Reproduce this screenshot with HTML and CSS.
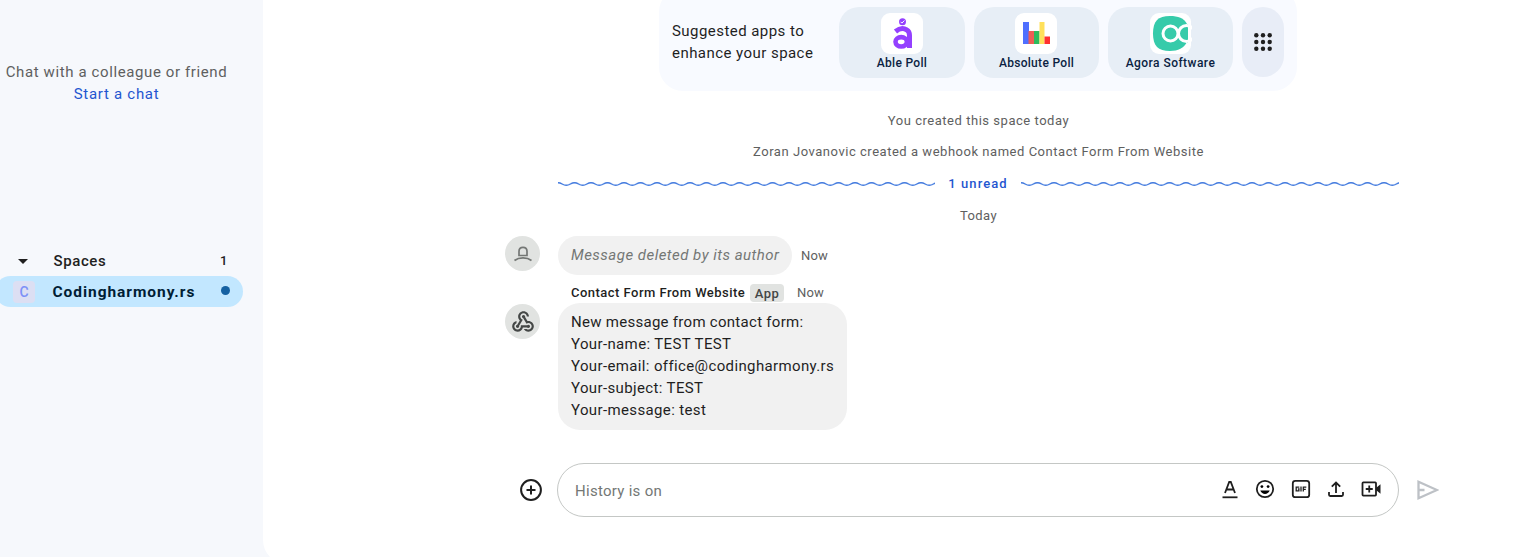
FILE: index.html
```html
<!DOCTYPE html>
<html lang="en">
<head>
<meta charset="utf-8">
<title>Codingharmony.rs - Chat</title>
<link rel="stylesheet" href="styles.css">
</head>
<body>
<div class="app">
  <aside class="sidebar">
    <div class="empty-chat">
      <p class="empty-text"><span>Chat with a colleague or friend</span></p>
      <a class="start-link">Start a chat</a>
    </div>
    <div class="section-head">
      <svg class="caret" viewBox="0 0 10 5"><path d="M0 0h10L5 5z"/></svg>
      <span class="section-title">Spaces</span>
      <span class="section-count">1</span>
    </div>
    <div class="space-row">
      <span class="space-avatar">C</span>
      <span class="space-name">Codingharmony.rs</span>
      <span class="unread-dot"></span>
    </div>
  </aside>
  <main class="main">
    <section class="suggest">
      <p class="suggest-text">Suggested apps to<br>enhance your space</p>
      <div class="app-card first">
        <span class="app-icon"><svg viewBox="0 0 42 41"><path d="M14.500 18.500q6-5 11.200-1.600 2.800 1.600 2.800 5.500V35" fill="none" stroke="#9440ff" stroke-width="5"/><ellipse cx="20.2" cy="28.800" rx="5.700" ry="4.700" fill="none" stroke="#9440ff" stroke-width="4.600"/><circle cx="21.500" cy="8.800" r="3.500" fill="#9440ff"/><path d="M19.600 8.800l1.300 1.300 2.500-2.600" fill="none" stroke="#fff" stroke-width="1"/></svg></span>
        <span class="app-name">Able Poll</span>
      </div>
      <div class="app-card">
        <span class="app-icon shifted"><svg viewBox="0 0 42 41"><path fill="#4f6fff" d="M8 9h6v22H8z"/><path fill="#ee5d55" d="M13.500 18H19v13h-5.500z"/><path fill="#2dbb5d" d="M19 18h5.500v13H19z"/><path fill="#ffe05a" d="M24.500 9h5v22h-5z"/><path fill="#ff3030" d="M29.500 23.500H35V31h-5.500z"/></svg></span>
        <span class="app-name">Absolute Poll</span>
      </div>
      <div class="app-card">
        <span class="app-icon wide"><svg viewBox="0 0 42 41"><path fill="#36cbaa" d="M20 3c8 0 14 2 17 8v18c-3 6-9 9-17 9C8 38 3 33 3 20.500S8 3 20 3z"/><path fill="#36cbaa" d="M30 11h8v19h-8z"/><g fill="none" stroke="#fff" stroke-width="3"><circle cx="20.500" cy="20.500" r="7.500"/><circle cx="36.500" cy="20.500" r="8"/></g><path fill="#fff" d="M38 8h3v25h-3z"/></svg></span>
        <span class="app-name agora">Agora Software</span>
      </div>
      <div class="more-apps"><svg viewBox="0 0 18 18"><g fill="#1f1f1f"><circle cx="2.300" cy="2.300" r="2.200"/><circle cx="9" cy="2.300" r="2.200"/><circle cx="15.700" cy="2.300" r="2.200"/><circle cx="2.300" cy="9" r="2.200"/><circle cx="9" cy="9" r="2.200"/><circle cx="15.700" cy="9" r="2.200"/><circle cx="2.300" cy="15.700" r="2.200"/><circle cx="9" cy="15.700" r="2.200"/><circle cx="15.700" cy="15.700" r="2.200"/></g></svg></div>
    </section>
    <p class="event">You created this space today</p>
    <p class="event">Zoran Jovanovic created a webhook named Contact Form From Website</p>
    <div class="unread">
      <svg class="wave"><defs><pattern id="w" width="16.500" height="6" patternUnits="userSpaceOnUse"><path d="M-4.125 3Q0 .4 4.125 3T12.375 3T20.625 3" fill="none" stroke="#3f78de" stroke-width="1.400"/></pattern></defs><rect width="100%" height="6" fill="url(#w)"/></svg>
      <span class="unread-label">1 unread</span>
      <svg class="wave"><rect width="100%" height="6" fill="url(#w)"/></svg>
    </div>
    <p class="event day">Today</p>

    <div class="message deleted">
      <span class="avatar"><svg viewBox="0 0 35 35" fill="none" stroke="#747775" stroke-width="1.700"><path d="M14 19.500v-4.300c0-5.200 8-5.200 8 0v4.300z"/><path d="M9.500 24.500c4.500-3.400 12.500-3.400 17 0"/></svg></span>
      <div class="bubble"><em>Message deleted by its author</em></div>
      <span class="time">Now</span>
    </div>
    <div class="message-head">
      <span class="sender">Contact Form From Website</span>
      <span class="badge">App</span>
      <span class="time">Now</span>
    </div>
    <div class="message form">
      <span class="avatar"><svg class="hook" viewBox="0 0 24 24"><path fill="#444746" d="M10 15h5.880c.27-.31.67-.5 1.120-.5.830 0 1.500.67 1.500 1.500s-.67 1.500-1.500 1.500c-.44 0-.84-.19-1.120-.5H11.900c-.46 2.280-2.480 4-4.900 4-2.760 0-5-2.240-5-5 0-2.420 1.720-4.440 4-4.900v2.070c-1.160.41-2 1.530-2 2.830 0 1.650 1.350 3 3 3s3-1.350 3-3v-1zm2.500-11c1.650 0 3 1.350 3 3h2c0-2.760-2.240-5-5-5s-5 2.240-5 5c0 1.430.6 2.710 1.550 3.620l-2.350 3.900c-.68.14-1.200.75-1.200 1.480 0 .83.67 1.500 1.500 1.500s1.500-.67 1.500-1.500c0-.16-.02-.31-.07-.45l3.380-5.630C10.490 9.610 9.500 8.420 9.500 7c0-1.650 1.350-3 3-3zm4.500 9c-.64 0-1.230.2-1.720.54l-3.050-5.070C11.530 8.350 11 7.740 11 7c0-.83.67-1.500 1.500-1.500S14 6.170 14 7c0 .15-.02.29-.06.43l2.190 3.650c.28-.05.57-.08.87-.08 2.760 0 5 2.240 5 5s-2.240 5-5 5c-1.850 0-3.470-1.010-4.330-2.500h2.670c.48.32 1.050.5 1.660.5 1.650 0 3-1.350 3-3s-1.350-3-3-3z"/></svg></span>
      <div class="bubble lines">
        <span>New message from contact form:</span>
        <span class="loose">Your-name: TEST TEST</span>
        <span class="loose">Your-email: office@codingharmony.rs</span>
        <span class="loose">Your-subject: TEST</span>
        <span class="loose">Your-message: test</span>
      </div>
    </div>

    <div class="composer">
      <svg class="add" viewBox="0 0 22 22" fill="none" stroke="#1f1f1f" stroke-width="2"><circle cx="11" cy="11" r="9.900"/><path d="M11 6.500v9M6.500 11h9"/></svg>
      <div class="input">
        <span class="placeholder">History is on</span>
        <div class="tools">
          <svg viewBox="0 0 20 20" fill="none" stroke="#1f1f1f" stroke-width="1.800"><path d="M5 14L9.200 3h1.600L15 14M6.500 10.500h7"/><path d="M2.500 18.300h15"/></svg>
          <svg viewBox="0 0 20 20"><circle cx="10" cy="10" r="8.200" fill="none" stroke="#1f1f1f" stroke-width="1.800"/><circle cx="6.900" cy="7.600" r="1.400"/><circle cx="13.100" cy="7.600" r="1.400"/><path d="M5.300 11.500h9.400c-1.700 4.500-7.700 4.500-9.400 0z"/></svg>
          <svg viewBox="0 0 20 20" fill="none" stroke="#1f1f1f"><rect x="1.800" y="1.800" width="16.400" height="16.400" rx="2.500" stroke-width="1.800"/><path stroke-width="1.300" d="M8.300 8.100H5.200v3.800h2.700v-2H6.800M10 7.500v5M12.300 12.500V8.100h3M12.300 10.300h2.500"/></svg>
          <svg viewBox="0 0 20 20" fill="none" stroke="#1f1f1f" stroke-width="1.800"><path d="M10 14V3.800M5.800 7.700L10 3.500l4.200 4.200M3 13v2.800c0 .8.400 1.200 1.200 1.200h11.600c.8 0 1.200-.4 1.200-1.200V13"/></svg>
          <svg viewBox="0 0 20 20" fill="none" stroke="#1f1f1f" stroke-width="1.800"><rect x="1.500" y="3.400" width="13.500" height="13.200" rx=".8"/><path d="M8.250 6.500v7M4.750 10h7"/><path fill="#1f1f1f" stroke="none" d="M15 9l4.500-3.800v9.600L15 11z"/></svg>
        </div>
      </div>
      <svg class="send" viewBox="0 0 22 20" fill="none" stroke="#bdc1c6" stroke-width="2.300"><path d="M1.500 1.800L20 10 1.500 18.200zM1.500 10h6"/></svg>
    </div>
  </main>
</div>
</body>
</html>
```
FILE: styles.css
```css
* { box-sizing: border-box; }
body { margin: 0; font: 15px/22px Roboto, "Liberation Sans", sans-serif; color: #1f1f1f; background: #f6f8fc; }
p { margin: 0; }
svg { display: block; flex: none; }
span { white-space: nowrap; }
.app { display: grid; grid-template-columns: 263px 1fr; height: 557px; overflow: hidden; }

.sidebar { padding-top: 61px; }
.empty-chat { width: 233px; text-align: center; letter-spacing: .61px; }
.empty-text { color: #5e6060; }
.start-link { color: #1f56d0; letter-spacing: .72px; }
.section-head { display: flex; align-items: center; height: 30px; margin-top: 141px; padding-left: 18px; }
.caret { width: 10px; height: 5px; margin-right: 25.500px; fill: #1f1f1f; }
.section-title { font-weight: 500; letter-spacing: .6px; flex: 1; }
.section-count { font-size: 13px; font-weight: 500; width: 43px; }
.space-row { display: flex; align-items: center; width: 248px; height: 31px; margin-left: -5px; background: #c2e7ff; border-radius: 16px; padding: 0 13px 0 18px; }
.space-avatar { width: 22px; height: 22px; border-radius: 4px; background: #dcdff3; color: #7c91f7; text-align: center; font-size: 14px; font-weight: 500; }
.space-name { flex: 1; margin-left: 17.500px; color: #001d35; font-size: 15.5px; font-weight: 700; letter-spacing: .95px; }
.unread-dot { width: 9px; height: 9px; border-radius: 50%; background: #1561a2; margin-top: -2px; }

/* The panel runs past the bottom of the window, so only part of its corner shows. */
.main { height: 564px; background: #fff; border-bottom-left-radius: 24px; padding-left: 242px; display: flex; flex-direction: column; }
.suggest { display: flex; margin: -12px 0 0 154px; width: 638px; height: 103px; padding: 19px 13px 13px; background: #f8faff; border-radius: 24px; }
.suggest-text { width: 167px; padding-top: 13px; letter-spacing: .45px; }
.app-card { display: flex; flex-direction: column; align-items: center; width: 125px; height: 71px; margin-right: 9px; padding-top: 6px; background: #e7eef6; border-radius: 20px; }
.app-card.first { width: 126px; }
.app-icon { width: 42px; height: 41px; border-radius: 9px; background: #fff; }
.app-icon svg { width: 42px; height: 41px; }
.app-icon.shifted { margin-right: 1px; }
.app-icon.wide { width: 41px; }
.app-name { margin-top: 1px; font-size: 12px; font-weight: 500; line-height: 16px; color: #0b1f42; letter-spacing: .3px; }
.agora { letter-spacing: .45px; }
.more-apps { display: grid; place-items: center; width: 42px; height: 70px; border-radius: 21px; background: #e8edf7; }
.more-apps svg { width: 18px; height: 18px; }

.event { margin-left: 53px; width: 841px; text-align: center; font-size: 13px; line-height: 20px; color: #5e6060; letter-spacing: .53px; margin-top: 20px; }
.event + .event { margin-top: 11px; }
.unread { display: flex; align-items: center; margin: 12px 0 0 53px; width: 841px; height: 20px; color: #1f56d0; }
.wave { width: 377px; height: 6px; }
.wave:last-child { width: 378px; }
.unread-label { flex: 1; text-align: center; font-size: 13px; font-weight: 500; letter-spacing: 1.05px; }
.day { margin-top: 12px; letter-spacing: .4px; }

.message { display: flex; align-items: flex-start; }
.avatar { width: 35px; height: 35px; margin-right: 18px; border-radius: 50%; background: #e1e3e1; display: grid; place-items: center; }
.avatar svg { width: 35px; height: 35px; }
.avatar .hook { width: 26px; height: 26px; }
.bubble { background: #f1f1f1; border-radius: 20px; padding: 8px 13px; }
.deleted { margin-top: 10px; }
.deleted .bubble { width: 234px; height: 39px; color: #747775; white-space: nowrap; letter-spacing: .48px; }
.time { font-size: 13px; color: #5e6060; letter-spacing: .2px; }
.deleted .time { margin: 9px 0 0 9px; }
.message-head { display: flex; align-items: center; height: 18px; margin: 9px 0 0 66px; }
.sender { width: 179px; font-size: 13px; font-weight: 500; letter-spacing: .47px; }
.badge { width: 34px; height: 18px; margin-right: 13px; border-radius: 4px; background: #e1e3e1; color: #444746; font-size: 13px; font-weight: 500; line-height: 20px; letter-spacing: .5px; text-align: center; }
.form { margin-top: 1px; }
.form .avatar { margin-top: 1px; }
.lines { display: flex; flex-direction: column; width: 289px; height: 127px; border-radius: 22px; letter-spacing: .28px; }
.lines .loose { letter-spacing: .37px; }

.composer { display: flex; align-items: center; margin: 33px 0 0 15px; height: 54px; }
.add { width: 22px; height: 22px; margin-right: 15px; }
.input { display: flex; align-items: center; justify-content: space-between; width: 842px; height: 54px; border: 1px solid #c4c7c5; border-radius: 27px; padding: 0 17px; }
.placeholder { color: #747775; margin-top: 2px; letter-spacing: .28px; }
.tools { display: flex; gap: 15.200px; margin-top: -2px; }
.tools svg { width: 20px; height: 20px; }
.send { width: 22px; height: 20px; margin-left: 18px; }
```
